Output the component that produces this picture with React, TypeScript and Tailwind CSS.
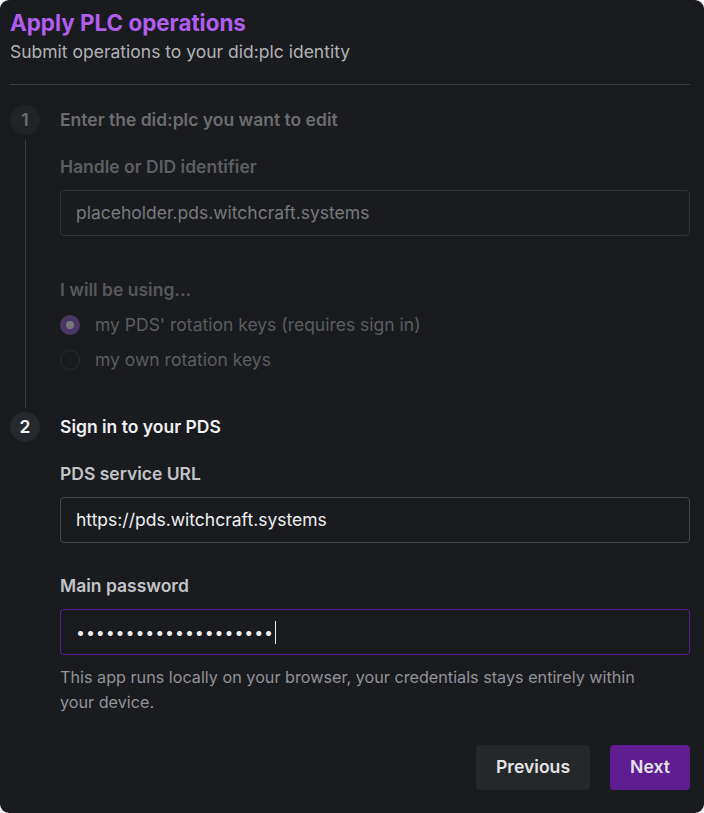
import React from "react";

function StepCircle({ n, dim }: { n: number; dim?: boolean }) {
  return (
    <div
      className={
        "flex h-[30px] w-[30px] shrink-0 items-center justify-center rounded-full text-[17.5px] font-semibold " +
        (dim ? "bg-[#222326] text-[#6c6d70]" : "bg-[#25282c] text-[#eef0f2]")
      }
    >
      {n}
    </div>
  );
}

export default function App() {
  return (
    <div className="min-h-[813px] w-[704px] bg-white" style={{ fontFamily: "Inter, 'Noto Sans', sans-serif" }}>
      <div className="flex min-h-[813px] w-[704px] flex-col rounded-[9px] bg-[#1a1b1e] pl-[10px] pr-[14px] pt-[7px] pb-[21px]">
        <h1 className="text-[22.4px] font-bold leading-[32px] text-[#b15ef0]">Apply PLC operations</h1>
        <p className="text-[17.5px] leading-[26px] text-[#b1b2b6]">Submit operations to your did:plc identity</p>
        <div className="mt-[19px] h-px w-full bg-[#3a3c41]" />

        {/* Step 1 */}
        <div className="mt-[20px] flex gap-[20px]">
          <div className="flex w-[30px] flex-col items-center">
            <StepCircle n={1} dim />
            <div className="mt-[5px] h-[268px] w-px bg-[#3a3c41]" />
          </div>
          <div className="flex flex-1 flex-col">
            <div className="flex h-[30px] items-center text-[17.5px] font-semibold text-[#6c6d70]">
              Enter the did:plc you want to edit
            </div>
            <div className="mt-[20px] text-[17.5px] font-semibold leading-[24px] text-[#5d5f63]">Handle or DID identifier</div>
            <div className="mt-[11px] flex h-[46px] items-center rounded-[4px] border border-[#303236] px-[15px] text-[17.5px] text-[#77797d]">
              placeholder.pds.witchcraft.systems
            </div>
            <div className="mt-[42px] text-[17.5px] font-semibold leading-[24px] text-[#56585c]">I will be using...</div>
            <div className="mt-[13px] flex flex-col gap-[15px]">
              <div className="flex items-center gap-[15px]">
                <div className="flex h-[20px] w-[20px] items-center justify-center rounded-full bg-[#4b3766]">
                  <div className="h-[8px] w-[8px] rounded-full bg-[#77787c]" />
                </div>
                <span className="text-[17.5px] leading-[20px] text-[#5b5d61]">my PDS' rotation keys (requires sign in)</span>
              </div>
              <div className="flex items-center gap-[15px]">
                <div className="h-[20px] w-[20px] rounded-full border border-[#2c2e32]" />
                <span className="text-[17.5px] leading-[20px] text-[#5b5d61]">my own rotation keys</span>
              </div>
            </div>
          </div>
        </div>

        {/* Step 2 */}
        <div className="mt-[4px] flex gap-[20px]">
          <div className="flex w-[30px] flex-col items-center">
            <StepCircle n={2} />
          </div>
          <div className="flex flex-1 flex-col">
            <div className="flex h-[30px] items-center text-[17.5px] font-semibold text-[#eef0f2]">Sign in to your PDS</div>
            <div className="mt-[20px] text-[17.5px] font-semibold leading-[24px] text-[#c3c4c7]">PDS service URL</div>
            <div className="mt-[11px] flex h-[46px] items-center rounded-[4px] border border-[#45474c] px-[15px] text-[17.5px] text-[#eef0f2]">
              https://pds.witchcraft.systems
            </div>
            <div className="mt-[31px] text-[17.5px] font-semibold leading-[24px] text-[#c3c4c7]">Main password</div>
            <div className="mt-[11px] flex h-[46px] items-center rounded-[4px] border border-[#5a1f8c] px-[15px] text-[16px] text-[#eef0f2]">
              <span className="tracking-[0.9px]">••••••••••••••••••••</span>
              <span className="ml-[1px] h-[23px] w-px bg-[#eef0f2]" />
            </div>
            <p className="mt-[10px] text-[16.2px] leading-[25px] text-[#929399]">
              This app runs locally on your browser, your credentials stays entirely within
              <br />
              your device.
            </p>
          </div>
        </div>

        <div className="mt-[30px] flex justify-end gap-[20px]">
          <button className="h-[45px] w-[114px] rounded-[4px] bg-[#25282b] text-[17.6px] font-semibold text-[#e3e4e6]">
            Previous
          </button>
          <button className="h-[45px] w-[80px] rounded-[4px] bg-[#5f1d91] text-[17.6px] font-semibold text-[#e3e4e6]">
            Next
          </button>
        </div>
      </div>
    </div>
  );
}
